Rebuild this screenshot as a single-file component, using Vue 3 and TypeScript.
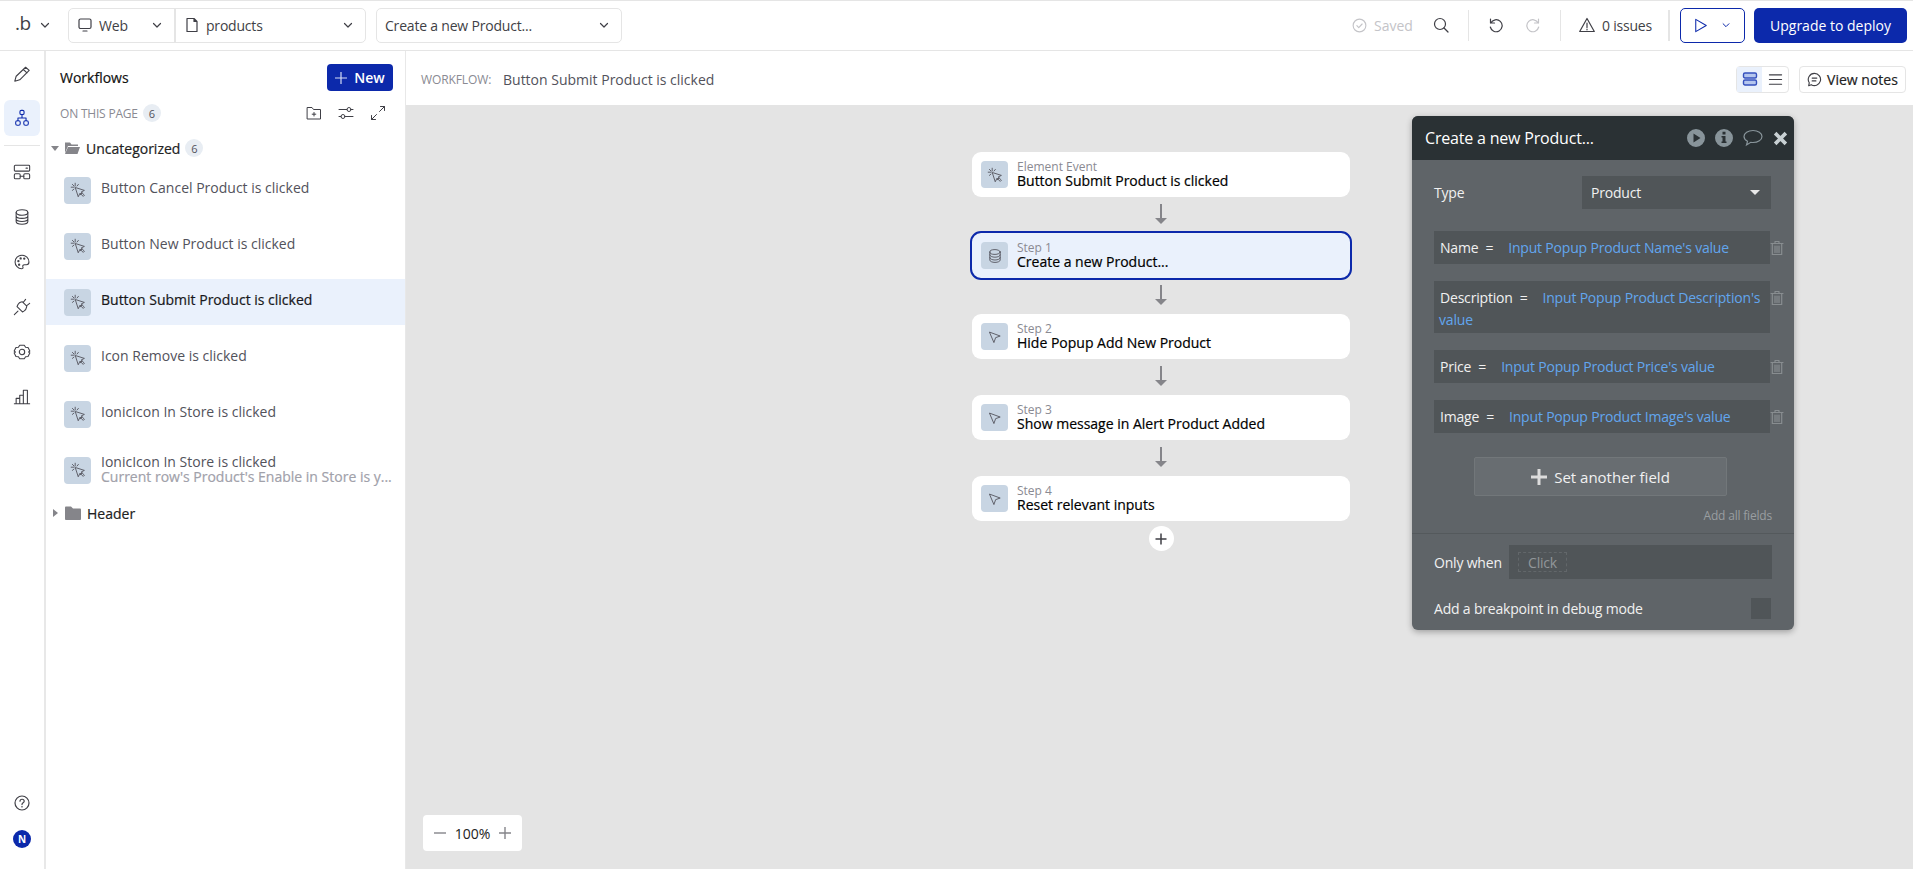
<script setup lang="ts">
type RailIcon = { id: string; active?: boolean }

const railIcons: RailIcon[] = [
  { id: 'i-data-flow' },
  { id: 'i-db' },
  { id: 'i-palette' },
  { id: 'i-plug' },
  { id: 'i-gear' },
  { id: 'i-chart' },
]

const workflows = [
  { name: 'Button Cancel Product is clicked' },
  { name: 'Button New Product is clicked' },
  { name: 'Button Submit Product is clicked', active: true },
  { name: 'Icon Remove is clicked' },
  { name: 'IonicIcon In Store is clicked' },
  { name: 'IonicIcon In Store is clicked', sub: "Current row's Product's Enable in Store is y..." },
]

const steps = [
  { label: 'Element Event', title: 'Button Submit Product is clicked', icon: 'i-click' },
  { label: 'Step 1', title: 'Create a new Product...', icon: 'i-db', selected: true },
  { label: 'Step 2', title: 'Hide Popup Add New Product', icon: 'i-pointer' },
  { label: 'Step 3', title: 'Show message in Alert Product Added', icon: 'i-pointer' },
  { label: 'Step 4', title: 'Reset relevant inputs', icon: 'i-pointer' },
]

const fields = [
  { key: 'Name', value: "Input Popup Product Name's value" },
  { key: 'Description', value: "Input Popup Product Description's value" },
  { key: 'Price', value: "Input Popup Product Price's value" },
  { key: 'Image', value: "Input Popup Product Image's value" },
]
</script>

<template>
  <div class="app">
    <svg class="defs" aria-hidden="true">
      <symbol id="i-chev" viewBox="0 0 12 12"><path d="M2.5 4.5 6 8l3.5-3.5" /></symbol>
      <symbol id="i-click" viewBox="0 0 20 20">
        <path d="M7 7l11 3.500-4 2 4 4-1.500 1.500-4-4-2 4z" />
        <path d="M6.500 1.500v3.500M1.500 6.500H5M3 3l2 2M10.500 3 8.800 5M3 10.500 5 8.800M15 13.500l-2 1.500M13 16l1.500-2" />
      </symbol>
      <symbol id="i-pointer" viewBox="0 0 20 20"><path d="M3.500 4 16.500 8.800l-5.700 2-2 5.700z" /></symbol>
      <symbol id="i-db" viewBox="0 0 20 20">
        <ellipse cx="10" cy="5" rx="6.500" ry="3" />
        <path d="M3.500 5v10c0 1.700 2.900 3 6.500 3s6.500-1.300 6.500-3V5M3.500 8.500c0 1.700 2.900 3 6.500 3s6.500-1.300 6.500-3M3.500 12c0 1.700 2.900 3 6.500 3s6.500-1.300 6.500-3" />
      </symbol>
      <symbol id="i-data-flow" viewBox="0 0 20 20">
        <rect x="1.500" y="2.500" width="17" height="6.500" rx="1" />
        <rect x="1.500" y="12" width="6.500" height="5.500" rx="1.200" />
        <rect x="12" y="12" width="6.500" height="5.500" rx="1.200" />
        <path d="M8 14.700h4M14.500 5.700h1.500" />
      </symbol>
      <symbol id="i-palette" viewBox="0 0 20 20">
        <path d="M10 2.500c-4.400 0-7.700 3.300-7.700 7.400 0 4.200 3.400 7.600 7.200 7.600 1.500 0 1.900-1 1.500-2-.5-1.400.1-2.500 1.700-2.500h2.300c1.600 0 2.700-1.300 2.700-3 0-4.300-3.400-7.500-7.700-7.500z" />
        <circle cx="6" cy="9" r=".7" /><circle cx="8.500" cy="6" r=".7" /><circle cx="12.500" cy="6.200" r=".7" /><circle cx="6.800" cy="13" r=".7" />
      </symbol>
      <symbol id="i-plug" viewBox="0 0 20 20">
        <path d="M1.500 18.500 5.500 14.500M4.500 9.500l6 6 2-1.200c1.500-1 2.200-2 2.500-3.800l.3-1.500-4.800-4.800-1.500.3C7.700 4.800 6.700 5.500 5.700 7zM11.500 4.700 14 1.500M15.300 8.500 18.500 6" />
      </symbol>
      <symbol id="i-gear" viewBox="0 0 20 20">
        <path d="M7.500 2.500h5l1.500 2.300 2.700.2 2 4-1.400 1 1.400 1-2 4-2.700.2-1.500 2.300h-5L6 15.200 3.300 15l-2-4 1.400-1-1.400-1 2-4L6 4.800z" />
        <circle cx="10" cy="10" r="3" />
      </symbol>
      <symbol id="i-chart" viewBox="0 0 20 20"><path d="M1.500 17.500h17M3.500 17.500v-6h4v6M7.500 17.500v-9.500h4v9.500M11.500 17.500V2.500h4.500v15" /></symbol>
      <symbol id="i-trash" viewBox="0 0 14 16">
        <path d="M1 3.500h12M5 3.500V1.500h4v2M2.300 3.500v11h9.400v-11M5 6v6.500M7 6v6.500M9 6v6.500" />
      </symbol>
    </svg>

    <div class="topbar">
      <span class="logo">.b</span>
      <svg class="ic chev logo-chev"><use href="#i-chev" /></svg>
      <div class="tb-group">
        <div class="tb-web">
          <svg class="ic tb-ic" viewBox="0 0 16 16"><rect x="2" y="2" width="12" height="9.500" rx="1.500" /><path d="M6 14h4" /></svg>
          <span>Web</span>
          <svg class="ic chev push"><use href="#i-chev" /></svg>
        </div>
        <div class="tb-page">
          <svg class="ic tb-ic" viewBox="0 0 16 16"><path d="M3 1.500h7l3 3v10H3zM10 1.500v3h3" /></svg>
          <span>products</span>
          <svg class="ic chev push"><use href="#i-chev" /></svg>
        </div>
      </div>
      <div class="tb-select">
        <span>Create a new Product...</span>
        <svg class="ic chev push"><use href="#i-chev" /></svg>
      </div>

      <div class="tb-right">
        <svg class="ic saved-ic" viewBox="0 0 16 16"><circle cx="8" cy="8" r="6.800" /><path d="m5.200 8.200 2 2 3.600-3.800" /></svg>
        <span class="saved">Saved</span>
        <svg class="ic search" viewBox="0 0 16 16"><circle cx="7" cy="7" r="5.500" /><path d="m11 11 4 4" /></svg>
        <i class="sep sep-a" />
        <svg class="ic undo" viewBox="0 0 16 16"><path d="M2.500 2v4h4M2.800 6a6 6 0 1 1-.5 4" /></svg>
        <svg class="ic redo" viewBox="0 0 16 16"><path d="M13.500 2v4h-4M13.200 6a6 6 0 1 0 .5 4" /></svg>
        <i class="sep sep-b" />
        <svg class="ic warn" viewBox="0 0 16 16"><path d="M8 1.500 15.300 14.500H.7zM8 6v4.500M8 12v.8" /></svg>
        <span class="issues">0 issues</span>
        <i class="sep sep-c" />
        <div class="run">
          <svg class="run-ic" viewBox="0 0 16 18"><path d="M2 2v14l12-7z" /></svg>
          <svg class="ic chev run-chev"><use href="#i-chev" /></svg>
        </div>
        <div class="deploy">Upgrade to deploy</div>
      </div>
    </div>

    <div class="main">
      <nav class="rail">
        <svg class="ic rail-ic pencil" viewBox="0 0 20 20"><path d="M14 2.500 18 6 7.500 16.500 2 18l1.500-5.500zM11.500 5l4 3.800" /></svg>
        <div class="rail-active">
          <svg class="ic rail-ic" viewBox="0 0 20 20"><rect x="7.700" y="1.500" width="4.600" height="4.600" rx="1.500" /><path d="M10 6v4M5.500 13v-3h9v3" /><rect x="3" y="13" width="5" height="5" rx="1.700" /><rect x="12" y="13" width="5" height="5" rx="1.700" /></svg>
        </div>
        <i class="rail-sep" />
        <svg v-for="r in railIcons" :key="r.id" class="ic rail-ic rail-item"><use :href="`#${r.id}`" /></svg>
        <div class="rail-bottom">
          <svg class="ic help" viewBox="0 0 16 16"><circle cx="8" cy="8" r="7" /><path d="M6 6.200c0-2.600 4.200-2.600 4.200 0 0 1.700-2.200 1.500-2.200 3.300M8 11.300v.7" /></svg>
          <span class="avatar">N</span>
        </div>
      </nav>

      <aside class="panel">
        <div class="panel-head">
          <span class="panel-title">Workflows</span>
          <div class="new-btn">
            <svg class="new-plus" viewBox="0 0 12 12"><path d="M6 0v12M0 6h12" /></svg>
            New
          </div>
        </div>
        <div class="page-row">
          <span class="page-label">ON THIS PAGE</span>
          <span class="badge">6</span>
          <svg class="ic page-ic first" viewBox="0 0 16 16"><path d="M1.500 2.500h4.500l1.500 2h7v9.500h-13zM8 7.500v3.500M6.200 9.200h3.600" /></svg>
          <svg class="ic page-ic" viewBox="0 0 16 16"><path d="M1 4.500h8M13 4.500h2M1 11.500h2M7 11.500h8" /><circle cx="11" cy="4.500" r="2" /><circle cx="5" cy="11.500" r="2" /></svg>
          <svg class="ic page-ic" viewBox="0 0 16 16"><path d="M9.500 6.500 14.500 1.500M10.500 1.500h4v4M6.500 9.500l-5 5M1.500 10.500v4h4" /></svg>
        </div>
        <div class="folder-row">
          <i class="caret-down" />
          <svg class="folder" viewBox="0 0 16 14"><path d="M1 3V1.500h5l1.500 2H14V5H4L1 12zM1 13l3-7h12l-2.500 7z" /></svg>
          <span class="folder-name">Uncategorized</span>
          <span class="badge">6</span>
        </div>
        <div class="wf-list">
          <div v-for="(w, i) in workflows" :key="i" class="wf" :class="{ active: w.active }">
            <div class="icon-box">
              <svg class="ic box-ic"><use href="#i-click" /></svg>
            </div>
            <div class="wf-text">
              <div class="wf-name">{{ w.name }}</div>
              <div v-if="w.sub" class="wf-sub">{{ w.sub }}</div>
            </div>
          </div>
        </div>
        <div class="folder-row header-row">
          <i class="caret-right" />
          <svg class="folder" viewBox="0 0 16 14"><path d="M0 1.500C0 1 .500.500 1 .500h5l2 2h7c.500 0 1 .500 1 1V13c0 .500-.500 1-1 1H1c-.500 0-1-.500-1-1z" /></svg>
          <span class="folder-name">Header</span>
        </div>
      </aside>

      <section class="workspace">
        <div class="wf-bar">
          <span class="wf-bar-label">WORKFLOW:</span>
          <span class="wf-bar-title">Button Submit Product is clicked</span>
          <div class="toggle">
            <span class="toggle-on">
              <svg class="toggle-ic" viewBox="0 0 16 16"><rect x="1.500" y="2" width="13" height="5" rx="1.500" /><rect x="1.500" y="9" width="13" height="5" rx="1.500" /></svg>
            </span>
            <span class="toggle-off">
              <svg class="ic toggle-lines" viewBox="0 0 16 16"><path d="M1.500 3h13M1.500 8h13M1.500 13h13" /></svg>
            </span>
          </div>
          <div class="notes">
            <svg class="ic notes-ic" viewBox="0 0 16 16"><path d="M8 1.500a6.500 6.500 0 1 1-3.500 12L1.800 14.600 2.400 11.500A6.500 6.500 0 0 1 8 1.500zM5.500 6.500h5M5.500 9.500h4" /></svg>
            View notes
          </div>
        </div>

        <div class="canvas">
          <div class="flow">
            <template v-for="(s, i) in steps" :key="s.label">
              <div v-if="i > 0" class="arrow">
                <svg viewBox="0 0 12 20" width="12" height="20"><path d="M6 0v14" class="arrow-line" /><path d="M0 14h12l-6 6z" class="arrow-head" /></svg>
              </div>
              <div class="card" :class="{ selected: s.selected }">
                <div class="icon-box">
                  <svg class="ic box-ic"><use :href="`#${s.icon}`" /></svg>
                </div>
                <div class="card-text">
                  <div class="card-label">{{ s.label }}</div>
                  <div class="card-title">{{ s.title }}</div>
                </div>
              </div>
            </template>
            <div class="add-step">
              <svg viewBox="0 0 12 12" width="12" height="12"><path d="M6 .500v11M.500 6h11" /></svg>
            </div>
          </div>

          <div class="zoomer">
            <svg viewBox="0 0 12 12" width="12" height="12"><path d="M0 6h12" /></svg>
            <span>100%</span>
            <svg viewBox="0 0 12 12" width="12" height="12"><path d="M6 0v12M0 6h12" /></svg>
          </div>

          <div class="dialog">
            <div class="dlg-head">
              <span class="dlg-title">Create a new Product...</span>
              <svg class="dlg-ic" viewBox="0 0 18 18"><path fill-rule="evenodd" d="M9 0a9 9 0 1 1 0 18A9 9 0 0 1 9 0zM6.500 4.500v9l7-4.500z" /></svg>
              <svg class="dlg-ic" viewBox="0 0 18 18"><path fill-rule="evenodd" d="M9 0a9 9 0 1 1 0 18A9 9 0 0 1 9 0zM7.500 2.800v2.700h3V2.800zM6.500 7v1.500h1v4h-1V14h5v-1.500h-1V7z" /></svg>
              <svg class="dlg-ic bubble" viewBox="0 0 20 18"><path d="M10 1.500c5 0 9 2.700 9 6s-4 6-9 6c-.8 0-1.500-.100-2.200-.2L3.500 16l1-3.700C2.400 11.200 1 9.500 1 7.500c0-3.300 4-6 9-6z" /></svg>
              <svg class="dlg-x" viewBox="0 0 14 14"><path d="M2 2l10 10M12 2 2 12" /></svg>
            </div>
            <div class="dlg-body">
              <div class="type-row">
                <span>Type</span>
                <div class="type-select">Product<i class="dlg-caret" /></div>
              </div>
              <div v-for="f in fields" :key="f.key" class="field-row">
                <div class="field">
                  <span class="field-key">{{ f.key }}</span><span class="field-eq">=</span><span class="field-val">{{ f.value }}</span>
                </div>
                <svg class="ic trash"><use href="#i-trash" /></svg>
              </div>
              <div class="another">
                <svg viewBox="0 0 16 16" width="16" height="16"><path d="M8 0v16M0 8h16" /></svg>
                Set another field
              </div>
              <div class="all-fields">Add all fields</div>
            </div>
            <div class="dlg-foot">
              <div class="when-row">
                <span class="when-label">Only when</span>
                <div class="when-input"><span class="click-chip">Click</span></div>
              </div>
              <div class="debug-row">
                <span>Add a breakpoint in debug mode</span>
                <i class="check" />
              </div>
            </div>
          </div>
        </div>
      </section>
    </div>
  </div>
</template>

<style>
html,
body {
  margin: 0;
  background: #fff;
  overflow: hidden;
}
</style>

<style scoped>
.app {
  width: 1913px;
  height: 869px;
  display: flex;
  flex-direction: column;
  overflow: hidden;
  font-family: 'Open Sans', 'Noto Sans', sans-serif;
  font-size: 14px;
  color: #1a1a1a;
  background: #fff;
}
.defs {
  display: none;
}
.ic {
  fill: none;
  stroke: #3f3f46;
  stroke-width: 1.2;
  stroke-linecap: round;
  stroke-linejoin: round;
  flex: none;
}
.chev {
  width: 12px;
  height: 12px;
}
.push {
  margin-left: auto;
}

/* top bar */
.topbar {
  height: 48px;
  flex: none;
  display: flex;
  align-items: center;
  box-sizing: content-box;
  border-top: 1px solid #e5e5e5;
  border-bottom: 1px solid #e5e5e5;
  padding: 0 6px 1px 15px;
}
.logo {
  font-size: 19px;
  line-height: 1;
  width: 24px;
  color: #3f3f46;
  letter-spacing: -0.5px;
  position: relative;
  top: -2px;
}
.tb-group {
  margin-left: 17px;
  width: 298px;
  height: 35px;
  display: flex;
  border: 1px solid #e5e5e5;
  border-radius: 5px;
  box-sizing: border-box;
}
.tb-web,
.tb-page,
.tb-select {
  display: flex;
  align-items: center;
  padding: 0 11px 0 8px;
  color: #3f3f46;
  box-sizing: border-box;
  letter-spacing: -0.2px;
}
.tb-web {
  width: 107px;
  border-right: 2px solid #e5e5e5;
}
.tb-page {
  flex: 1;
}
.tb-ic {
  width: 16px;
  height: 16px;
  margin-right: 6px;
}
.tb-select {
  margin-left: 10px;
  width: 246px;
  height: 35px;
  border: 1px solid #e5e5e5;
  border-radius: 5px;
}
.tb-right {
  margin-left: auto;
  display: flex;
  align-items: center;
}
.saved-ic {
  width: 15px;
  height: 15px;
  stroke: #c4c4c8;
}
.saved {
  margin-left: 7px;
  font-weight: 500;
  color: #c4c4c8;
}
.search {
  width: 16px;
  height: 16px;
  margin-left: 20px;
}
.sep {
  width: 1px;
  height: 31px;
  background: #e5e5e5;
}
.sep-a {
  margin-left: 19px;
}
.undo {
  width: 16px;
  height: 16px;
  margin-left: 19px;
}
.redo {
  width: 16px;
  height: 16px;
  margin-left: 21px;
  stroke: #c4c4c8;
}
.sep-b {
  margin-left: 19px;
}
.warn {
  width: 16px;
  height: 16px;
  margin-left: 18px;
}
.issues {
  margin-left: 7px;
  color: #3f3f46;
  letter-spacing: -0.2px;
}
.sep-c {
  margin-left: 16px;
  width: 2px;
}
.run {
  margin-left: 10px;
  width: 65px;
  height: 35px;
  box-sizing: border-box;
  border: 1px solid #0c29ab;
  border-radius: 5px;
  display: flex;
  align-items: center;
}
.run-ic {
  width: 14px;
  height: 17px;
  margin-left: 13px;
  fill: none;
  stroke: #0c29ab;
  stroke-width: 1.2;
  stroke-linejoin: round;
}
.run-chev {
  margin-left: 13px;
  width: 10px;
  height: 10px;
  stroke: #0c29ab;
}
.deploy {
  margin-left: 9px;
  width: 153px;
  height: 35px;
  background: #0c29ab;
  color: #fff;
  border-radius: 5px;
  display: flex;
  align-items: center;
  justify-content: center;
}

.main {
  flex: 1;
  display: flex;
  min-height: 0;
}

/* left rail */
.rail {
  width: 46px;
  flex: none;
  box-sizing: border-box;
  border-right: 2px solid #e8e8e8;
  display: flex;
  flex-direction: column;
  align-items: center;
  padding-top: 14px;
}
.rail-ic {
  width: 18px;
  height: 18px;
}
.pencil {
  margin-bottom: 17px;
}
.rail-active {
  width: 36px;
  height: 36px;
  border-radius: 6px;
  background: #eaf1fc;
  display: flex;
  align-items: center;
  justify-content: center;
}
.rail-active .rail-ic {
  stroke: #0c29ab;
}
.rail-sep {
  width: 36px;
  height: 1px;
  background: #e5e5e5;
  margin: 9px 0 17px;
}
.rail-item {
  margin-bottom: 27px;
}
.rail-bottom {
  margin-top: auto;
  display: flex;
  flex-direction: column;
  align-items: center;
  padding-bottom: 21px;
  gap: 19px;
}
.help {
  width: 16px;
  height: 16px;
}
.avatar {
  width: 18px;
  height: 18px;
  border-radius: 50%;
  background: #0c29ab;
  color: #fff;
  font-size: 10px;
  font-weight: 700;
  display: flex;
  align-items: center;
  justify-content: center;
}

/* workflow list panel */
.panel {
  width: 360px;
  flex: none;
  box-sizing: border-box;
  border-right: 1px solid #e8e8e8;
}
.panel-head {
  display: flex;
  align-items: center;
  justify-content: space-between;
  padding: 13px 12px 0 14px;
}
.panel-title {
  font-weight: 500;
  color: #111;
  -webkit-text-stroke: 0.2px #111;
}
.new-btn {
  width: 66px;
  height: 27px;
  border-radius: 4px;
  background: #0c29ab;
  color: #fff;
  font-weight: 600;
  display: flex;
  align-items: center;
  justify-content: center;
  gap: 7px;
}
.new-plus {
  width: 12px;
  height: 12px;
  stroke: #d5dcf5;
  stroke-width: 1.2;
  fill: none;
}
.page-row {
  display: flex;
  align-items: center;
  padding: 13px 19px 0 14px;
  height: 18px;
}
.page-label {
  font-size: 12px;
  font-weight: 500;
  color: #8a8a92;
  letter-spacing: -0.2px;
}
.badge {
  width: 18px;
  height: 18px;
  margin-left: 5px;
  border-radius: 50%;
  background: #e8edf3;
  color: #52525b;
  font-size: 11px;
  display: flex;
  align-items: center;
  justify-content: center;
}
.page-ic {
  width: 16px;
  height: 16px;
  margin-left: 16px;
  stroke-width: 1;
}
.page-ic.first {
  margin-left: auto;
}
.folder-row {
  display: flex;
  align-items: center;
  height: 20px;
  padding: 16px 0 0 5px;
}
.caret-down {
  width: 0;
  height: 0;
  margin-right: 5px;
  border: 4px solid transparent;
  border-top: 5px solid #85858a;
  border-bottom: 0;
}
.caret-right {
  width: 0;
  height: 0;
  margin: 0 7px 0 2px;
  border: 4px solid transparent;
  border-left: 5px solid #85858a;
  border-right: 0;
}
.folder {
  width: 16px;
  height: 14px;
  fill: #85858a;
}
.folder-name {
  margin-left: 6px;
  font-weight: 500;
  color: #222;
  -webkit-text-stroke: 0.2px #222;
}
.folder-row .badge {
  margin-left: 5px;
}
.wf-list {
  margin-top: 9px;
}
.wf {
  height: 46px;
  margin-bottom: 10px;
  display: flex;
  align-items: center;
  padding-left: 18px;
}
.wf.active {
  background: #eaf1fc;
}
.icon-box {
  width: 27px;
  height: 27px;
  flex: none;
  border-radius: 4px;
  background: #c8d5e3;
  display: flex;
  align-items: center;
  justify-content: center;
}
.box-ic {
  width: 16px;
  height: 16px;
  stroke: #52525b;
  stroke-width: 1.1;
}
.wf-text {
  margin-left: 10px;
  position: relative;
  top: -3px;
}
.wf-name {
  font-weight: 500;
  color: #52525b;
  line-height: 17px;
  white-space: nowrap;
}
.wf.active .wf-name {
  color: #18181b;
  -webkit-text-stroke: 0.2px #18181b;
}
.wf-sub {
  font-weight: 500;
  color: #a1a1aa;
  line-height: 14px;
  white-space: nowrap;
  -webkit-text-stroke: 0.2px #a1a1aa;
}
.wf:last-child .wf-text {
  top: -2px;
}
.header-row {
  padding-top: 0;
  margin-top: 8px;
}

/* right side */
.workspace {
  flex: 1;
  min-width: 0;
  display: flex;
  flex-direction: column;
}
.wf-bar {
  height: 54px;
  flex: none;
  display: flex;
  align-items: center;
  padding: 2px 7px 0 15px;
  box-sizing: border-box;
}
.wf-bar-label {
  font-size: 12px;
  font-weight: 500;
  color: #8a8a92;
  width: 82px;
  letter-spacing: -0.1px;
}
.wf-bar-title {
  color: #52525b;
  font-weight: 500;
}
.toggle {
  margin-left: auto;
  width: 53px;
  height: 27px;
  box-sizing: border-box;
  border: 1px solid #e5e5e5;
  border-radius: 4px;
  display: flex;
}
.toggle-on {
  width: 25px;
  background: #eaf1fc;
  display: flex;
  align-items: center;
  justify-content: center;
}
.toggle-ic {
  width: 16px;
  height: 16px;
  fill: #b5c6ee;
  stroke: #3550bd;
  stroke-width: 1.4;
}
.toggle-off {
  flex: 1;
  display: flex;
  align-items: center;
  justify-content: center;
}
.toggle-lines {
  width: 15px;
  height: 15px;
}
.notes {
  margin-left: 10px;
  width: 107px;
  height: 27px;
  box-sizing: border-box;
  border: 1px solid #e5e5e5;
  border-radius: 4px;
  display: flex;
  align-items: center;
  justify-content: center;
  gap: 5px;
  font-weight: 500;
  color: #222;
  -webkit-text-stroke: 0.2px #222;
}
.notes-ic {
  width: 15px;
  height: 15px;
}

.canvas {
  flex: 1;
  position: relative;
  background: #e4e4e4;
  padding: 47px 0 0 566px;
}
.flow {
  width: 378px;
  display: flex;
  flex-direction: column;
  align-items: center;
}
.card {
  width: 100%;
  height: 45px;
  box-sizing: border-box;
  background: #fff;
  border-radius: 9px;
  display: flex;
  align-items: center;
  padding-left: 9px;
}
.card.selected {
  background: #eaf1fc;
  outline: 2px solid #0c29ab;
  outline-offset: 0;
}
.card-text {
  margin-left: 9px;
}
.card-label {
  font-size: 12px;
  line-height: 13px;
  color: #8a8a92;
  font-weight: 500;
}
.card-title {
  font-size: 14px;
  line-height: 16px;
  font-weight: 500;
  color: #000;
  -webkit-text-stroke: 0.2px #000;
}
.arrow {
  height: 36px;
  padding-top: 7px;
  box-sizing: border-box;
}
.arrow svg {
  display: block;
}
.arrow-line {
  stroke: #85858a;
  stroke-width: 2;
  fill: none;
}
.arrow-head {
  fill: #85858a;
}
.add-step {
  width: 25px;
  height: 25px;
  margin-top: 5px;
  border-radius: 50%;
  background: #fff;
  display: flex;
  align-items: center;
  justify-content: center;
}
.add-step svg {
  stroke: #3f3f46;
  stroke-width: 1.5;
}
.zoomer {
  position: absolute;
  left: 17px;
  bottom: 18px;
  width: 99px;
  height: 36px;
  background: #fff;
  border-radius: 4px;
  display: flex;
  align-items: center;
  justify-content: center;
  gap: 9px;
  color: #222;
}
.zoomer svg {
  stroke: #85858a;
  stroke-width: 1.4;
}

/* property editor */
.dialog {
  position: absolute;
  left: 1006px;
  top: 11px;
  width: 382px;
  height: 514px;
  border-radius: 6px;
  background: #5f6468;
  box-shadow: 0 2px 6px rgba(0, 0, 0, 0.3);
  overflow: hidden;
  color: #f1f1f1;
  letter-spacing: -0.19px;
}
.dlg-head {
  height: 44px;
  background: #2a3134;
  display: flex;
  align-items: center;
  padding: 0 6px 0 13px;
  gap: 10px;
}
.dlg-title {
  font-size: 16px;
  margin-right: auto;
  color: #fff;
}
.dlg-ic {
  width: 18px;
  height: 18px;
  fill: #88949a;
}
.dlg-ic.bubble {
  width: 20px;
  fill: none;
  stroke: #88949a;
  stroke-width: 1.2;
}
.dlg-x {
  width: 15px;
  height: 15px;
  stroke: #c8d0d3;
  stroke-width: 3.4;
  fill: none;
}
.dlg-body {
  padding: 16px 0 0 22px;
  height: 374px;
  box-sizing: border-box;
  border-bottom: 1px solid #54595c;
}
.type-row {
  display: flex;
  align-items: center;
  justify-content: space-between;
  width: 337px;
  margin-bottom: 22px;
}
.type-select {
  width: 189px;
  height: 33px;
  background: #505558;
  display: flex;
  align-items: center;
  padding: 0 11px 0 9px;
  box-sizing: border-box;
  justify-content: space-between;
}
.dlg-caret {
  width: 0;
  height: 0;
  border: 5px solid transparent;
  border-top: 5px solid #e8e8e8;
  border-bottom: 0;
}
.field-row {
  display: flex;
  align-items: center;
  margin-bottom: 17px;
}
.field {
  width: 336px;
  box-sizing: border-box;
  background: #505558;
  padding: 6px 5px 2px;
  line-height: 22px;
  min-height: 33px;
}
.field-key {
  padding-left: 1px;
}
.field-eq {
  margin: 0 15px 0 7px;
}
.field-val {
  color: #62a6ee;
}
.trash {
  width: 14px;
  height: 16px;
  stroke: #888d90;
  margin-left: 0;
  align-self: flex-start;
  margin-top: 9px;
}
.another {
  margin: 24px 0 0 40px;
  width: 253px;
  height: 39px;
  box-sizing: border-box;
  background: #686d71;
  border: 1px solid #72777a;
  border-radius: 2px;
  display: flex;
  align-items: center;
  justify-content: center;
  gap: 7px;
  font-size: 15px;
  letter-spacing: 0;
}
.another svg {
  stroke: #dcdcdc;
  stroke-width: 3;
}
.all-fields {
  width: 338px;
  margin-top: 11px;
  text-align: right;
  font-size: 12px;
  color: #999ea1;
}
.dlg-foot {
  padding: 11px 0 0 22px;
}
.when-row {
  display: flex;
  align-items: center;
}
.when-label {
  width: 75px;
}
.when-input {
  width: 263px;
  height: 34px;
  background: #505558;
  display: flex;
  align-items: center;
  padding-left: 9px;
  box-sizing: border-box;
}
.click-chip {
  width: 49px;
  height: 20px;
  box-sizing: border-box;
  border: 1px dashed #62676a;
  display: flex;
  align-items: center;
  justify-content: center;
  color: #92979a;
}
.debug-row {
  margin-top: 19px;
  width: 337px;
  display: flex;
  align-items: center;
  justify-content: space-between;
}
.check {
  width: 20px;
  height: 21px;
  background: #505558;
}
</style>
